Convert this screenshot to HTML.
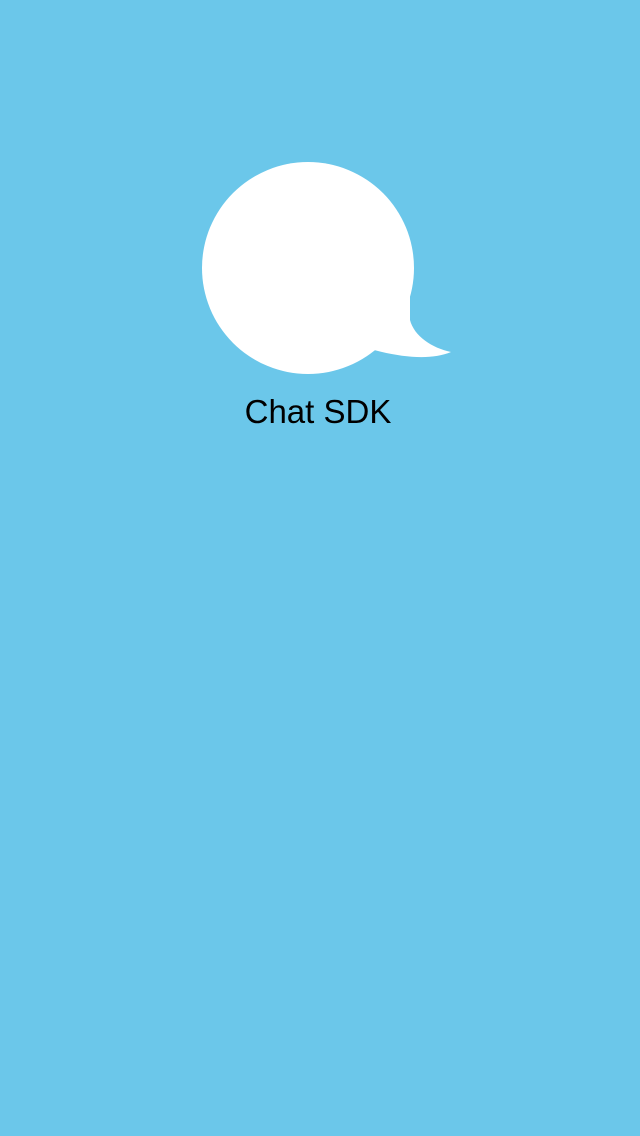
<!DOCTYPE html>
<html><head><meta charset="utf-8"><style>
html,body{margin:0;padding:0;}
body{width:640px;height:1136px;background:#6bc7ea;position:relative;overflow:hidden;}
.t{position:absolute;left:0;width:636px;text-align:center;top:393px;font-family:"Liberation Sans",sans-serif;font-size:33px;color:#000;}
</style></head><body>
<svg width="640" height="500" style="position:absolute;left:0;top:0">
<circle cx="308" cy="268" r="106" fill="#fff"/>
<path d="M408 280 L410 296 L410 320 C414 336 432 348 451 352 C432 360 404 358 374 350 L380 330 Z" fill="#fff"/>
</svg>
<div class="t">Chat SDK</div>
</body></html>
